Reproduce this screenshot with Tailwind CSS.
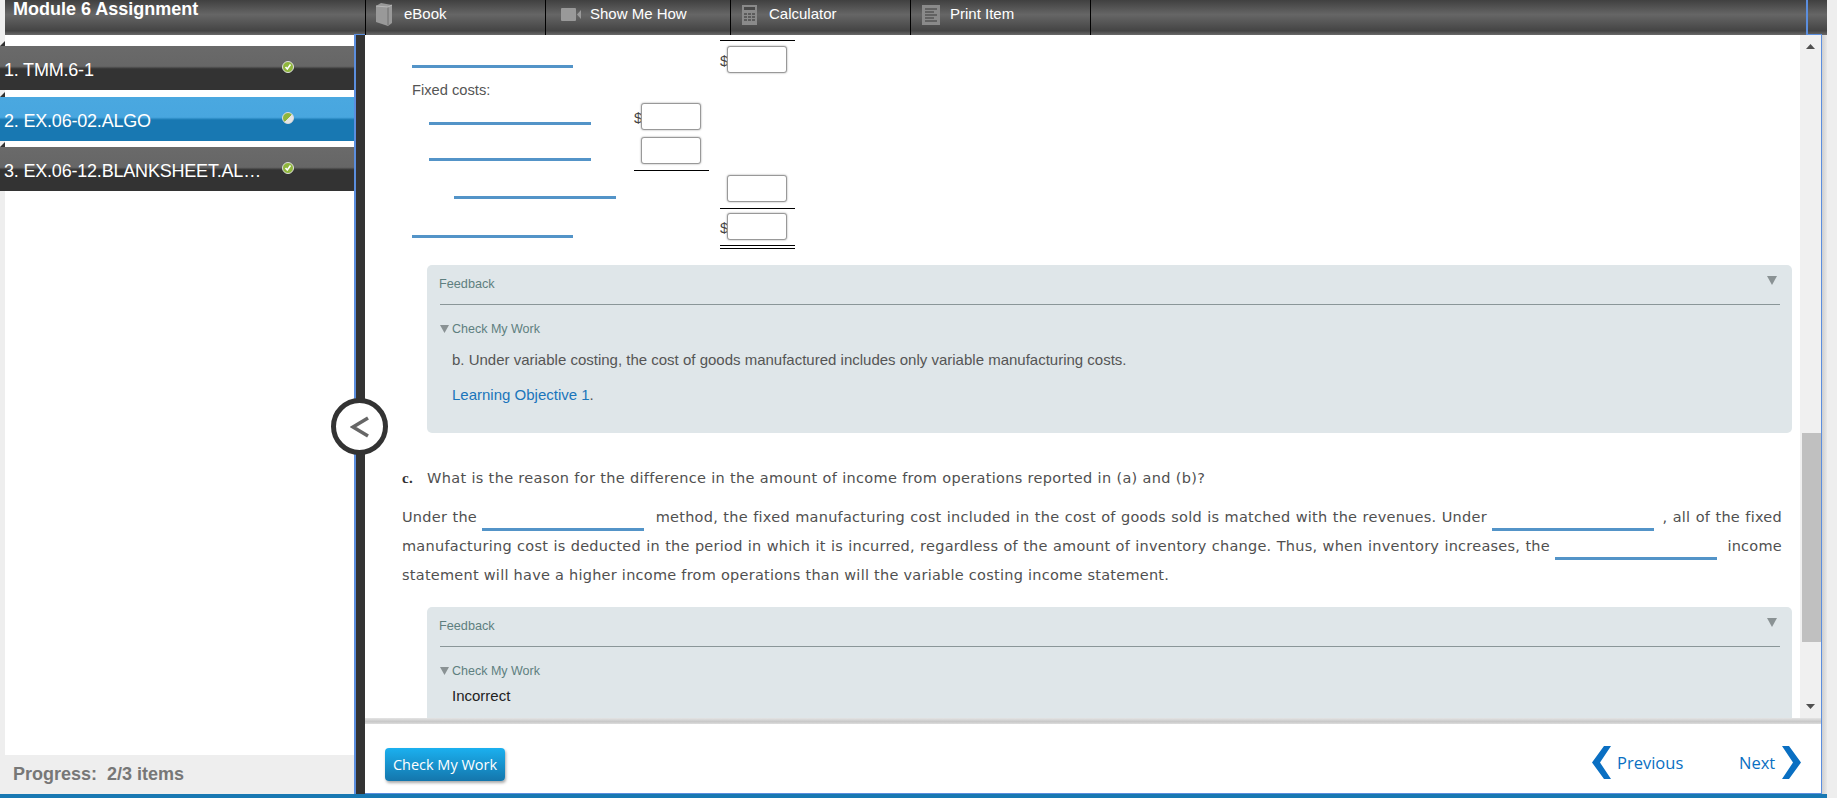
<!DOCTYPE html>
<html lang="en">
<head>
  <meta charset="UTF-8">
  <meta name="viewport" content="width=device-width, initial-scale=1.0">
  <script src="https://cdn.jsdelivr.net/npm/@tailwindcss/browser@4"></script>
  <title>Module 6 Assignment</title>
</head>
<body class="bg-[#eeeeee] font-['Liberation_Sans',sans-serif]">
  <div class="relative w-[1837px] h-[798px] overflow-hidden flex flex-col">

    <!-- top bar -->
    <div class="flex h-[35px] ml-[5px] w-[1822px] shrink-0 bg-[linear-gradient(#404040,#666666_42%,#444444_88%,#6a6a6a)] text-white text-[15px]">
      <div class="w-[361px] border-r border-black text-[18px] font-bold leading-[18px] pl-[8px] relative">
        Module 6 Assignment
        <div class="absolute right-0 bottom-0 w-[11px] h-px bg-[#5b8ede]"></div>
      </div>
      <div class="flex w-[180px] items-center gap-[11px] pl-[10px] pb-[6px] border-r border-black">
        <svg width="17" height="23" viewBox="0 0 17 23"><path d="M0 3 L5 0 L16 2 V20 L12 23 L0 19Z" fill="#999999"/><path d="M12 4 V22" stroke="#6e6e6e"/><path d="M0 3 L12 4 L16 2" fill="none" stroke="#b8b8b8"/></svg>
        <span>eBook</span>
      </div>
      <div class="flex w-[185px] items-center gap-[8px] pl-[15px] pb-[6px] border-r border-black">
        <svg width="21" height="13" viewBox="0 0 21 13"><rect width="15" height="13" rx="1" fill="#999999"/><path d="M16 6.5 L20 2 V11Z" fill="#999999"/></svg>
        <span>Show Me How</span>
      </div>
      <div class="flex w-[180px] items-center gap-[12px] pl-[11px] pb-[6px] border-r border-black">
        <svg width="15" height="20" viewBox="0 0 15 20"><rect width="15" height="20" fill="#8a8a8a"/><rect x="2" y="2" width="11" height="3" fill="#4a4a4a"/><path d="M2 8h3v2H2zM6 8h3v2H6zM10 8h3v2h-3zM2 11h3v2H2zM6 11h3v2H6zM10 11h3v2h-3zM2 14h3v2H2zM6 14h3v2H6zM10 14h3v2h-3z" fill="#5c5c5c"/></svg>
        <span>Calculator</span>
      </div>
      <div class="flex w-[180px] items-center gap-[10px] pl-[11px] pb-[6px] border-r border-black">
        <svg width="18" height="20" viewBox="0 0 18 20"><rect width="18" height="20" fill="#8a8a8a"/><path d="M3 4h12M3 7h9M3 10h12M3 13h9M3 16h12" stroke="#555555" stroke-width="1.5"/></svg>
        <span>Print Item</span>
      </div>
      <div class="flex-1"></div>
      <div class="w-[16px] border-l-2 border-b border-[#5b8ede]"></div>
      <div class="w-[5px]"></div>
    </div>

    <div class="flex flex-1 min-h-0">
      <!-- sidebar -->
      <div class="w-[354px] shrink-0 flex flex-col">
        <div class="flex-1 ml-[5px] bg-white"></div>
        <div class="h-[39px] shrink-0 pl-[13px] flex items-center text-[18px] font-bold text-[#777777] whitespace-pre">Progress:  2/3 items</div>
      </div>
      <div class="absolute left-0 top-[46px] w-[354px] flex flex-col text-white text-[18px] tracking-[-0.2px]">
        <div class="relative flex items-center h-[44px] pl-[4px] bg-[linear-gradient(#6a6a6a,#666666_46%,#333333_52%,#333333)]">
          <svg class="absolute left-0 -top-[5px]" width="5" height="5" viewBox="0 0 5 5"><path d="M0 5 L5 0 V5Z" fill="#333333"/></svg>
          <span class="w-[278px] pt-[4px]">1. TMM.6-1</span>
          <span class="flex items-center justify-center w-[12px] h-[12px] rounded-full bg-[#8fb63c] border border-[#dddddd] -mt-[2px]"><svg width="8" height="8" viewBox="0 0 8 8"><path d="M1.5 4 L3.3 6 L6.5 1.5" fill="none" stroke="white" stroke-width="1.6"/></svg></span>
        </div>
        <div class="relative flex items-center h-[44px] mt-[7px] pl-[4px] bg-[linear-gradient(#4aa8e0,#48a6df_46%,#1878b2_52%,#1878b2)]">
          <svg class="absolute left-0 -top-[5px]" width="5" height="5" viewBox="0 0 5 5"><path d="M0 5 L5 0 V5Z" fill="#333333"/></svg>
          <span class="w-[278px] pt-[4px]">2. EX.06-02.ALGO</span>
          <span class="w-[12px] h-[12px] rounded-full bg-[linear-gradient(135deg,#8fb63c_50%,#e5e5e5_50%)] border border-[#dddddd] -mt-[2px]"></span>
        </div>
        <div class="relative flex items-center h-[44px] mt-[6px] pl-[4px] bg-[linear-gradient(#6a6a6a,#666666_46%,#333333_52%,#333333)]">
          <svg class="absolute left-0 -top-[5px]" width="5" height="5" viewBox="0 0 5 5"><path d="M0 5 L5 0 V5Z" fill="#333333"/></svg>
          <span class="w-[278px] pt-[4px]">3. EX.06-12.BLANKSHEET.AL…</span>
          <span class="flex items-center justify-center w-[12px] h-[12px] rounded-full bg-[#8fb63c] border border-[#dddddd] -mt-[2px]"><svg width="8" height="8" viewBox="0 0 8 8"><path d="M1.5 4 L3.3 6 L6.5 1.5" fill="none" stroke="white" stroke-width="1.6"/></svg></span>
        </div>
      </div>

      <!-- divider strip -->
      <div class="w-[11px] shrink-0 border-l-2 border-[#5b8ede] bg-[#333333]"></div>

      <!-- main -->
      <div class="w-[1457px] shrink-0 flex flex-col bg-white border-r border-b border-[#5b8ede]">
        <div class="flex h-[685px] shrink-0">
          <div class="w-[1435px] overflow-hidden text-[#444444]">
            <!-- statement rows -->
            <div class="pl-[47px] pt-[5px] text-[14.7px] leading-[16px]">
              <div class="flex h-[42px]">
                <div class="w-[222px] pt-[25px]"><div class="w-[161px] h-[3px] bg-[#5394c8]"></div></div>
                <div class="w-[75px]"></div>
                <div class="w-[75px] ml-[11px] border-t border-black pt-[5px] flex self-start"><span class="w-[7px] text-[15px] leading-[29px]">$</span><input type="text" class="w-[60px] h-[27px] rounded-[3px] border border-[#999999] shadow-[0_0_2px_#999999] bg-white"></div>
              </div>
              <div class="h-[21px] text-[#555555]">Fixed costs:</div>
              <div class="flex h-[34px]">
                <div class="w-[222px] pl-[17px] pt-[19px]"><div class="w-[162px] h-[3px] bg-[#5394c8]"></div></div>
                <div class="w-[75px] flex self-start"><span class="w-[7px] text-[15px] leading-[29px]">$</span><input type="text" class="w-[60px] h-[27px] rounded-[3px] border border-[#999999] shadow-[0_0_2px_#999999] bg-white"></div>
              </div>
              <div class="flex h-[38px]">
                <div class="w-[222px] pl-[17px] pt-[21px]"><div class="w-[162px] h-[3px] bg-[#5394c8]"></div></div>
                <div class="w-[75px] h-[34px] pl-[7px] border-b border-black"><input type="text" class="w-[60px] h-[27px] rounded-[3px] border border-[#999999] shadow-[0_0_2px_#999999] bg-white"></div>
              </div>
              <div class="flex h-[38px]">
                <div class="w-[222px] pl-[42px] pt-[21px]"><div class="w-[162px] h-[3px] bg-[#5394c8]"></div></div>
                <div class="w-[75px]"></div>
                <div class="w-[75px] h-[34px] ml-[11px] pl-[7px] border-b border-black"><input type="text" class="w-[60px] h-[27px] rounded-[3px] border border-[#999999] shadow-[0_0_2px_#999999] bg-white"></div>
              </div>
              <div class="flex h-[36px]">
                <div class="w-[222px] pt-[22px]"><div class="w-[161px] h-[3px] bg-[#5394c8]"></div></div>
                <div class="w-[75px]"></div>
                <div class="w-[75px] h-[36px] ml-[11px] flex border-b-4 border-double border-black"><span class="w-[7px] text-[15px] leading-[29px]">$</span><input type="text" class="w-[60px] h-[27px] rounded-[3px] border border-[#999999] shadow-[0_0_2px_#999999] bg-white"></div>
              </div>
            </div>

            <!-- feedback b -->
            <div class="ml-[62px] mt-[16px] w-[1365px] rounded-[5px] bg-[#dfe6e9] pl-[12px] pr-[12px] pt-[11px] pb-[30px] text-[12.7px] leading-[16px] text-[#5e7f7f]">
              <div class="flex justify-between h-[16px]">
                <span>Feedback</span>
                <svg class="mr-[3px]" width="10" height="9" viewBox="0 0 10 9"><path d="M0 0 H10 L5 9Z" fill="#8a9294"/></svg>
              </div>
              <div class="h-px bg-[#8a9698] ml-px mt-[12px]"></div>
              <div class="flex items-center gap-[3px] ml-px mt-[16px] text-[12.5px]">
                <svg width="9" height="8" viewBox="0 0 9 8"><path d="M0 0 H9 L4.5 8Z" fill="#8a9294"/></svg>
                <span>Check My Work</span>
              </div>
              <div class="pl-[13px] mt-[15px] text-[15px] text-[#555555]">b. Under variable costing, the cost of goods manufactured includes only variable manufacturing costs.</div>
              <div class="pl-[13px] mt-[19px] text-[15px] text-[#1a75bb]">Learning Objective 1<span class="text-[#555555]">.</span></div>
            </div>

            <!-- part c -->
            <div class="ml-[37px] w-[1380px] text-[14.5px] tracking-[0.25px] font-['DejaVu_Sans',sans-serif] text-[#505050]">
              <div class="mt-[35px] leading-[20px] tracking-[0.33px]"><b class="font-['Liberation_Serif',serif] text-[15px] mr-[14px] text-[#333333]">c.</b>What is the reason for the difference in the amount of income from operations reported in (a) and (b)?</div>
              <div class="mt-[15px] leading-[29px]">
                <div class="text-justify [text-align-last:justify]">Under the <span class="inline-block w-[162px] mr-[6px] border-b-[3px] border-[#5394c8] align-[-9px]"></span> method, the fixed manufacturing cost included in the cost of goods sold is matched with the revenues. Under <span class="inline-block w-[162px] mr-[3px] border-b-[3px] border-[#5394c8] align-[-9px]"></span> , all of the fixed</div>
                <div class="text-justify [text-align-last:justify]">manufacturing cost is deducted in the period in which it is incurred, regardless of the amount of inventory change. Thus, when inventory increases, the <span class="inline-block w-[162px] mr-[5px] border-b-[3px] border-[#5394c8] align-[-9px]"></span> income</div>
                <div>statement will have a higher income from operations than will the variable costing income statement.</div>
              </div>
            </div>

            <!-- feedback c, cut by the scroll area -->
            <div class="ml-[62px] mt-[17px] w-[1365px] h-[130px] rounded-[5px] bg-[#dfe6e9] pl-[12px] pr-[12px] pt-[11px] text-[12.7px] leading-[16px] text-[#5e7f7f]">
              <div class="flex justify-between h-[16px]">
                <span>Feedback</span>
                <svg class="mr-[3px]" width="10" height="9" viewBox="0 0 10 9"><path d="M0 0 H10 L5 9Z" fill="#8a9294"/></svg>
              </div>
              <div class="h-px bg-[#8a9698] ml-px mt-[12px]"></div>
              <div class="flex items-center gap-[3px] ml-px mt-[16px] text-[12.5px]">
                <svg width="9" height="8" viewBox="0 0 9 8"><path d="M0 0 H9 L4.5 8Z" fill="#8a9294"/></svg>
                <span>Check My Work</span>
              </div>
              <div class="pl-[13px] mt-[9px] text-[15px] text-[#222222]">Incorrect</div>
            </div>
          </div>

          <!-- scrollbar -->
          <div class="w-[21px] ml-auto bg-[#f0f0f0] flex flex-col items-center justify-between pt-[9px] pb-[11px] relative">
            <svg width="9" height="5" viewBox="0 0 9 5"><path d="M4.5 0 L9 5 H0Z" fill="#505050"/></svg>
            <div class="absolute left-[2px] right-0 top-[398px] h-[209px] bg-[#c0c0c0]"></div>
            <svg width="9" height="5" viewBox="0 0 9 5"><path d="M0 0 H9 L4.5 5Z" fill="#505050"/></svg>
          </div>
        </div>

        <!-- bottom bar -->
        <div class="flex-1 flex items-center pl-[20px] pr-[20px] relative">
          <div class="absolute left-0 right-0 -top-[2px] h-[6px] bg-[linear-gradient(#e4e4e4,#c8c8c8_60%,#dddddd)]"></div>
          <button class="w-[120px] h-[33px] pt-px rounded-[4px] text-white text-[14.5px] font-['Open_Sans',sans-serif] bg-[linear-gradient(#1bb0ef,#1476ac)] shadow-[1px_2px_3px_#aaaaaa] mt-[15px]">Check My Work</button>
          <div class="flex items-center ml-auto mt-[11px] text-[16.5px] font-['Open_Sans',sans-serif] text-[#0a6fc2]">
            <svg width="19" height="33" viewBox="0 0 19 33"><path d="M12 0 H19 L8 16.5 L19 33 H12 L0 16.5Z" fill="#0a6fc2"/></svg>
            <span class="ml-[6px] w-[67px] mt-[2px]">Previous</span>
            <span class="ml-[55px] w-[37px] mt-[2px]">Next</span>
            <svg class="ml-[6px]" width="19" height="33" viewBox="0 0 19 33"><path d="M7 0 H0 L11 16.5 L0 33 H7 L19 16.5Z" fill="#0a6fc2"/></svg>
          </div>
        </div>
      </div>

      <!-- shadow right of the panel -->
      <div class="w-[5px] shrink-0 bg-[linear-gradient(90deg,#cfcfcf,#e8e8e8)]"></div>
    </div>
    <div class="h-[4px] shrink-0 w-[1827px] bg-[#1878b2]"></div>

    <!-- sidebar collapse handle -->
    <button class="absolute left-[331px] top-[398px] w-[57px] h-[57px] rounded-full border-[5px] border-[#333333] bg-white flex items-center justify-center">
      <svg width="20" height="22" viewBox="0 0 20 22"><path d="M18 2 L3 11 L18 20" fill="none" stroke="#666666" stroke-width="3.5"/></svg>
    </button>
  </div>
</body>
</html>
